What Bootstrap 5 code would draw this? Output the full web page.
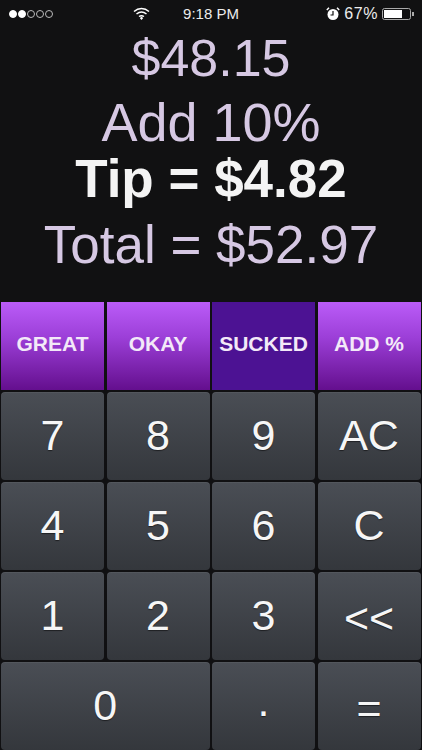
<!DOCTYPE html>
<html lang="en"><head><meta charset="utf-8"><title>Tip</title>
<link href="https://cdn.jsdelivr.net/npm/bootstrap@5.3.0/dist/css/bootstrap.min.css" rel="stylesheet">
<style>
html,body{height:100%}
body{background:#111112;font-family:"Liberation Sans",Arial,sans-serif;width:422px;height:750px;overflow:hidden;color:#fff}
.stat-bar{height:27px;padding:0 8px 0 9px;font-size:15px;color:#ececec;position:relative}
.stat-clock{position:absolute;left:0;right:0;top:4px;text-align:center;font-size:15px;line-height:20px}
.stat-dots{width:45px;gap:1px}
.stat-dot{width:8px;height:8px;border-radius:50%;border:1px solid #bbb}
.stat-dot.on{background:#fff;border-color:#fff}
.stat-pct{font-size:16px;letter-spacing:.6px}
.readout{height:275px;color:#d6c8e3;text-align:center}
.rd-line{line-height:1;white-space:nowrap}
.rd-bill{font-size:52px;height:62px;line-height:62px}
.rd-add{font-size:54px;height:67px;line-height:67px}
.rd-tip{font-size:53px;height:45px;line-height:45px;font-weight:700;color:#f4f4f4}
.rd-total{font-size:53px;height:88px;line-height:88px}
.keypad{display:grid;grid-template-columns:repeat(4,103px);grid-template-rows:repeat(5,88px);gap:2px 2.5px;padding:0 1px;background:#101012;height:448px}
.keypad .btn{border:0;border-radius:4px;padding:0 0 2px;color:#f6f6f6;display:flex;align-items:center;justify-content:center;box-shadow:inset 0 1px 0 rgba(255,255,255,.05)}
.keypad .key-tip{border-radius:0;font-size:21px;font-weight:700;padding-bottom:4px;background:linear-gradient(#bb5cf8,#9c3fd8 40%,#640f8e);box-shadow:none;color:#f3e9f8}
.keypad .key-tip.picked{background:#4c1293}
.keypad .key-num{font-size:43px;background:linear-gradient(#4a4e55,#34373c);text-shadow:0 1px 1px rgba(0,0,0,.5)}
.keypad .key-wide{grid-column:span 2}
.keypad .key-dot{padding-bottom:10px}
.keypad .key-low{padding:4px 0 0}
</style></head>
<body>
<div class="stat-bar d-flex align-items-center justify-content-between">
  <div class="stat-dots d-flex"><span class="stat-dot on"></span><span class="stat-dot on"></span><span class="stat-dot"></span><span class="stat-dot"></span><span class="stat-dot"></span></div>
  <div class="stat-clock"><svg width="17" height="13" viewBox="0 0 17 13" style="position:absolute;left:133px;top:3px"><path d="M1 4.500C5.500.5 11.500.5 16 4.500M3.500 7C6.500 4.500 10.500 4.500 13.500 7M6 9.500c1.500-1 3.500-1 5 0" fill="none" stroke="#fff" stroke-width="1.500"/><path d="M6.800 11 8.500 9.800 10.200 11 8.500 13z" fill="#fff"/></svg>9:18 PM</div>
  <div class="d-flex align-items-center gap-1 position-relative">
    <svg width="14" height="14" viewBox="0 0 14 14"><circle cx="7" cy="7.500" r="5.500" fill="#fff"/><path d="M7 4v4H4.500" fill="none" stroke="#111" stroke-width="1.200"/><path d="M.8 3 3 .8M13.200 3 11 .8" stroke="#fff" stroke-width="1.500"/></svg>
    <span class="stat-pct">67%</span>
    <svg width="32" height="14" viewBox="0 0 32 14"><rect x=".5" y="1.500" width="28" height="11" rx="2" fill="none" stroke="#aaa"/><rect x="2" y="3" width="18" height="8" fill="#fff"/><rect x="30" y="5" width="2" height="4" fill="#aaa"/></svg>
  </div>
</div>
<div class="readout">
  <div class="rd-line rd-bill">$48.15</div>
  <div class="rd-line rd-add">Add 10%</div>
  <div class="rd-line rd-tip">Tip = $4.82</div>
  <div class="rd-line rd-total">Total = $52.97</div>
</div>
<div class="keypad">
  <button class="btn key-tip">GREAT</button><button class="btn key-tip">OKAY</button><button class="btn key-tip picked">SUCKED</button><button class="btn key-tip">ADD %</button>
  <button class="btn key-num">7</button><button class="btn key-num">8</button><button class="btn key-num">9</button><button class="btn key-num">AC</button>
  <button class="btn key-num">4</button><button class="btn key-num">5</button><button class="btn key-num">6</button><button class="btn key-num">C</button>
  <button class="btn key-num">1</button><button class="btn key-num">2</button><button class="btn key-num">3</button><button class="btn key-num key-low">&lt;&lt;</button>
  <button class="btn key-num key-wide">0</button><button class="btn key-num key-dot">.</button><button class="btn key-num key-low">=</button>
</div>
<script src="https://cdn.jsdelivr.net/npm/bootstrap@5.3.0/dist/js/bootstrap.bundle.min.js"></script>
</body></html>
